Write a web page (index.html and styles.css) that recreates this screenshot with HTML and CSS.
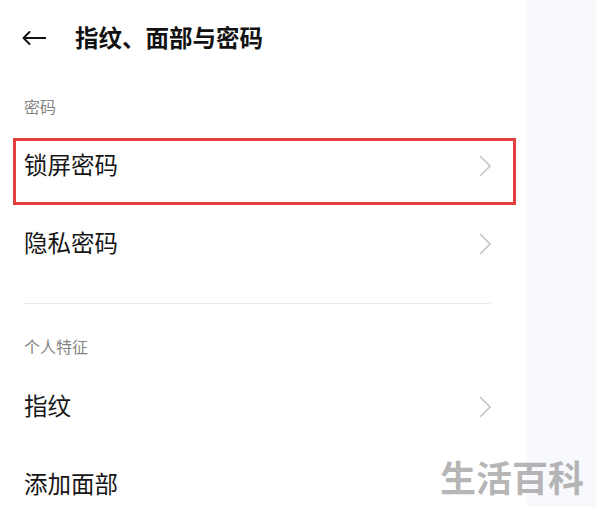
FILE: index.html
```html
<!DOCTYPE html>
<html lang="zh-CN">
<head>
<meta charset="utf-8">
<title>指纹、面部与密码</title>
<link rel="stylesheet" href="styles.css">
</head>
<body>
<div class="screen">
  <main class="main">
    <header class="header">
      <svg class="back" width="24" height="14" viewBox="0 0 24 14" aria-hidden="true">
        <path d="M1.5 7H23.5M1.5 7L7.5 1M1.5 7L7.5 13" fill="none" stroke="#111" stroke-width="1.9" stroke-linecap="round" stroke-linejoin="round"/>
      </svg>
      <h1 class="title">指纹、面部与密码</h1>
    </header>

    <div class="section-label first">密码</div>
    <div class="row highlighted">
      <span class="row-text">锁屏密码</span>
      <svg class="chev" width="12" height="22" viewBox="0 0 12 22" aria-hidden="true"><path d="M1 1L11 11L1 21" fill="none" stroke="#c6c6c6" stroke-width="1.6"/></svg>
      <span class="mark"></span>
    </div>
    <div class="row">
      <span class="row-text">隐私密码</span>
      <svg class="chev" width="12" height="22" viewBox="0 0 12 22" aria-hidden="true"><path d="M1 1L11 11L1 21" fill="none" stroke="#c6c6c6" stroke-width="1.6"/></svg>
    </div>

    <div class="divider"></div>

    <div class="section-label second">个人特征</div>
    <div class="row">
      <span class="row-text">指纹</span>
      <svg class="chev" width="12" height="22" viewBox="0 0 12 22" aria-hidden="true"><path d="M1 1L11 11L1 21" fill="none" stroke="#c6c6c6" stroke-width="1.6"/></svg>
    </div>
    <div class="row">
      <span class="row-text">添加面部</span>
    </div>
  </main>
  <aside class="side"></aside>
  <div class="watermark">生活百科</div>
</div>
</body>
</html>
```

FILE: styles.css
```css
* { box-sizing: border-box; }
html, body {
  margin: 0;
  padding: 0;
  background: #ffffff;
}
body {
  font-family: "Noto Sans CJK SC", "Noto Sans", sans-serif;
  color: #161616;
  overflow: hidden;
}
.screen {
  position: relative;
  display: flex;
  width: 596px;
  height: 507px;
  overflow: hidden;
}
.main {
  width: 527px;
  flex: none;
  background: #ffffff;
}
.side {
  flex: 1;
  background: #f8f9fd;
}
.header {
  height: 78px;
  display: flex;
  align-items: center;
  padding-left: 22px;
  padding-bottom: 4px;
}
.back {
  display: block;
  flex: none;
  margin-top: 2px;
}
.title {
  margin: 0 0 0 29px;
  font-size: 23.5px;
  font-weight: 700;
  line-height: 30px;
  color: #111;
}
.section-label {
  font-size: 16px;
  line-height: 20px;
  color: #858585;
  padding-left: 24px;
}
.section-label.first {
  margin-top: 18px;
  margin-bottom: 11px;
}
.section-label.second {
  margin-top: 32px;
  margin-bottom: 12px;
}
.row {
  position: relative;
  height: 78px;
  display: flex;
  align-items: center;
  justify-content: space-between;
  padding: 0 36px 0 24px;
}
.row-text {
  font-size: 23.5px;
  line-height: 30px;
  padding-bottom: 4px;
  color: #161616;
}
.chev {
  display: block;
  flex: none;
}
.mark {
  position: absolute;
  left: 13px;
  top: 11px;
  width: 503px;
  height: 67px;
  border: 3px solid #e2403f;
  pointer-events: none;
}
.divider {
  height: 1px;
  background: #e8e8e8;
  margin: 20px 37px 0 23px;
}
.watermark {
  position: absolute;
  left: 440px;
  top: 458px;
  font-size: 36px;
  line-height: 36px;
  font-weight: 700;
  color: rgba(150, 150, 150, 0.7);
  white-space: nowrap;
}
```
